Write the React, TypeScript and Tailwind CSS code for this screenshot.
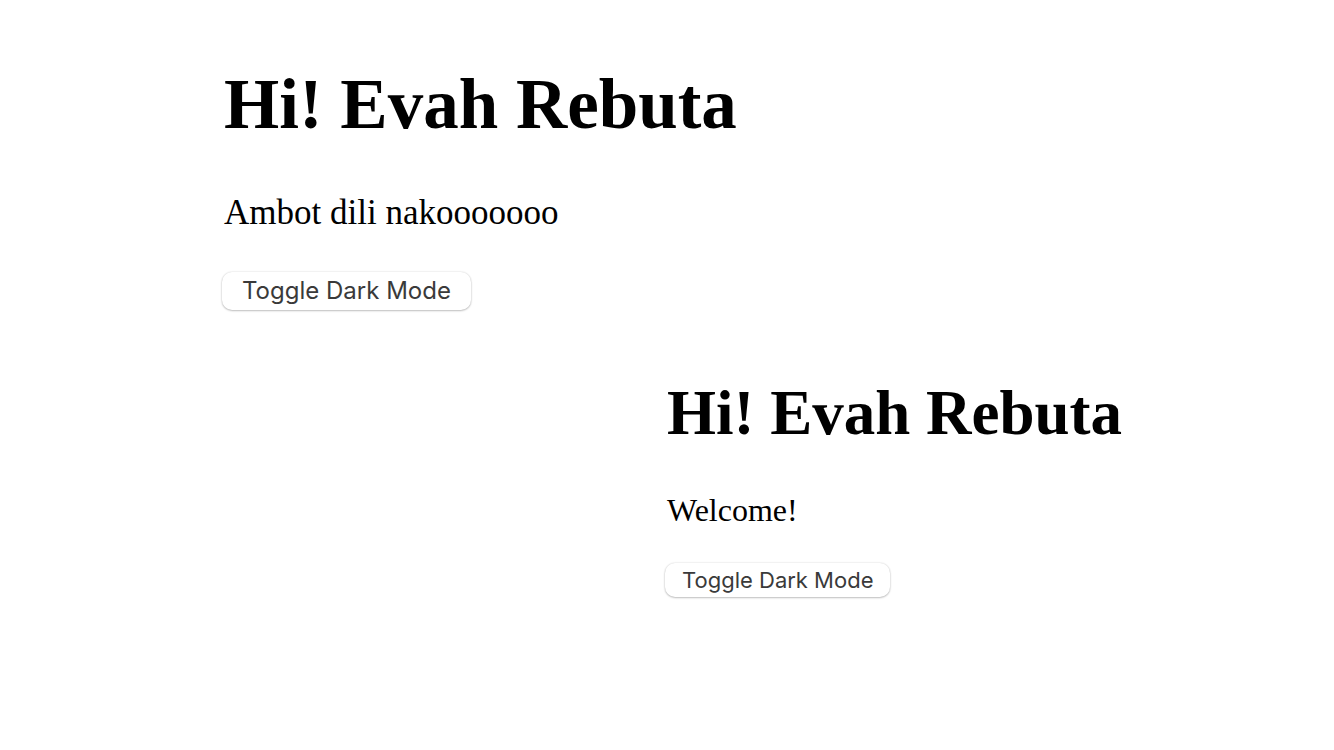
type GreetingProps = {
  message: string;
  size: 'large' | 'small';
};

function Greeting({ message, size }: GreetingProps) {
  const large = size === 'large';
  return (
    <section className="flex flex-col items-start">
      <h1
        className={
          large
            ? 'text-[71px] leading-[80px] font-bold'
            : 'text-[63px] leading-[72px] font-bold'
        }
      >
        Hi! Evah Rebuta
      </h1>
      <p className={large ? 'mt-12 text-[35px] leading-[42px]' : 'mt-11 text-[32px] leading-[34px]'}>
        {message}
      </p>
      <button
        type="button"
        className={
          large
            ? "mt-[38px] -ml-0.5 rounded-[10px] bg-white px-5 text-[24px] leading-[38px] text-[#3a3a3a] shadow-[0_0_2px_rgba(0,0,0,0.16),0_1px_2px_rgba(0,0,0,0.22)] font-['Inter',sans-serif]"
            : "mt-9 -ml-0.5 rounded-[10px] bg-white px-[17px] text-[22px] leading-[34px] text-[#3a3a3a] shadow-[0_0_2px_rgba(0,0,0,0.16),0_1px_2px_rgba(0,0,0,0.22)] font-['Inter',sans-serif]"
        }
      >
        Toggle Dark Mode
      </button>
    </section>
  );
}

export default function App() {
  return (
    <main className="flex min-h-screen flex-col bg-white font-['Liberation_Serif',serif] text-black">
      <div className="pt-16 pl-56">
        <Greeting message="Ambot dili nakooooooo" size="large" />
      </div>
      <div className="ml-[50%] pt-[67px]">
        <Greeting message="Welcome!" size="small" />
      </div>
    </main>
  );
}
